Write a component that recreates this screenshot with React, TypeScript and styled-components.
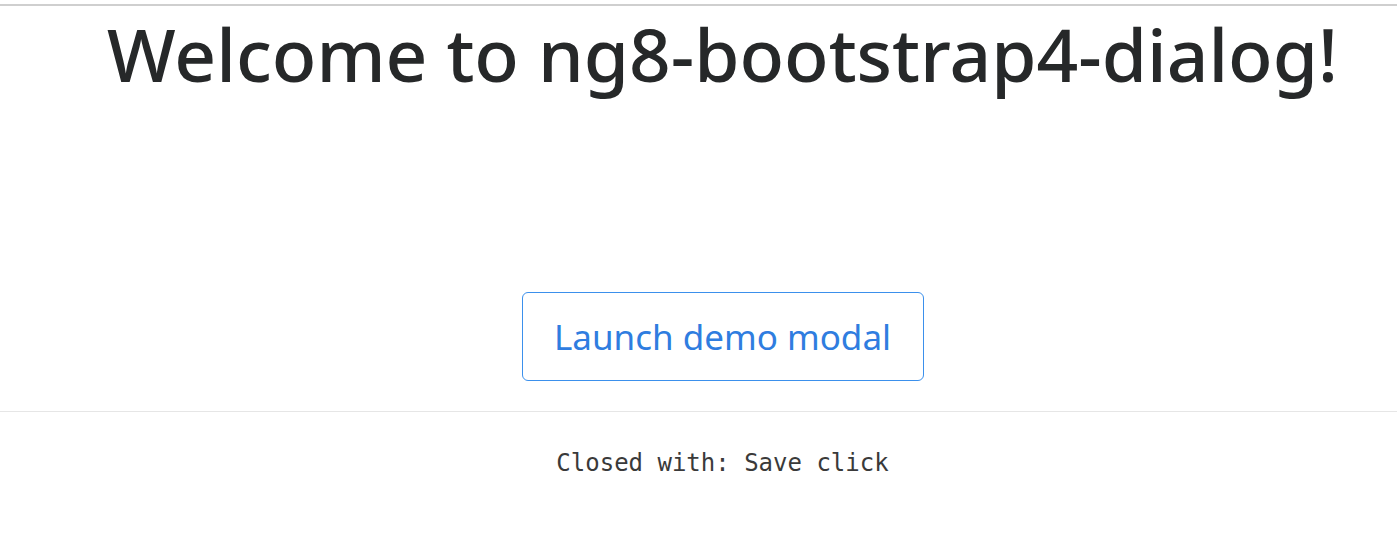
import React from 'react'
import styled, { createGlobalStyle } from 'styled-components'

const GlobalStyle = createGlobalStyle`
  html, body {
    margin: 0;
    padding: 0;
    background: #ffffff;
  }
  body {
    font-family: 'Noto Sans', 'Open Sans', sans-serif;
    color: #212529;
  }
`

const Page = styled.div`
  border-top: 2px solid #cfcfcf;
  margin-top: 4px;
  width: 1397px;
  height: 545px;
  overflow: hidden;
`

const Column = styled.div`
  display: flex;
  flex-direction: column;
  align-items: center;
  padding-left: 48px;
`

const Title = styled.h1`
  margin: 0;
  padding-top: 4px;
  font-size: 73px;
  font-weight: 500;
  line-height: 88px;
  color: #262829;
  white-space: nowrap;
`

const LaunchButton = styled.button`
  margin-top: 194px;
  width: 402px;
  height: 89px;
  background: #ffffff;
  border: 1.5px solid #3b90ec;
  border-radius: 6px;
  color: #2f7de0;
  font-family: 'Noto Sans', 'Open Sans', sans-serif;
  font-size: 35px;
  padding: 0;
  cursor: pointer;
`

const Divider = styled.hr`
  margin: 30px 0 0;
  border: 0;
  border-top: 1.5px solid #e6e6e6;
  width: 100%;
`

const Result = styled.code`
  display: block;
  margin-top: 37px;
  padding-left: 48px;
  text-align: center;
  font-family: 'DejaVu Sans Mono', 'Liberation Mono', monospace;
  font-size: 24px;
  color: #3a3a3a;
`

export default function App() {
  return (
    <>
      <GlobalStyle />
      <Page>
        <Column>
          <Title>Welcome to ng8-bootstrap4-dialog!</Title>
          <LaunchButton>Launch demo modal</LaunchButton>
        </Column>
        <Divider />
        <Result>Closed with: Save click</Result>
      </Page>
    </>
  )
}
